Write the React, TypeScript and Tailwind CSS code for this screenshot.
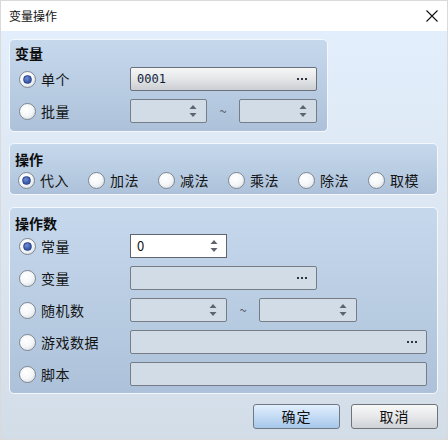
import React from "react";

const font = { fontFamily: '"Noto Sans CJK SC", "Noto Sans", sans-serif' };

function Radio({ checked }: { checked?: boolean }) {
  return (
    <span className="flex h-[17px] w-[17px] shrink-0 items-center justify-center rounded-full border border-[#7f8791] bg-[radial-gradient(circle_at_40%_35%,#ffffff_0%,#f4f6f8_50%,#cfd5dc_100%)]">
      {checked && (
        <span className="h-[9px] w-[9px] rounded-full border border-[#2d4690] bg-[radial-gradient(circle_at_40%_35%,#7290d6_0%,#3a5aa8_60%,#2c4a96_100%)]" />
      )}
    </span>
  );
}

function SpinArrows() {
  return (
    <svg width="8" height="16" viewBox="0 0 8 16" className="shrink-0">
      <path d="M4 2 L7.5 6 L0.5 6 Z" fill="#5d6470" />
      <path d="M0.5 10 L7.5 10 L4 14 Z" fill="#5d6470" />
    </svg>
  );
}

function Dots() {
  return (
    <span className="flex shrink-0 gap-[2px]">
      <span className="h-[2px] w-[2px] bg-[#2f3540]" />
      <span className="h-[2px] w-[2px] bg-[#2f3540]" />
      <span className="h-[2px] w-[2px] bg-[#2f3540]" />
    </span>
  );
}

function DisabledBox({ className = "", children }: { className?: string; children?: React.ReactNode }) {
  return (
    <div
      className={`flex h-[24px] items-center justify-end rounded-[2px] border border-[#767d86] bg-[#d2dce6] pr-[9px] ${className}`}
    >
      {children}
    </div>
  );
}

function OptionLabel({ checked, text }: { checked?: boolean; text: string }) {
  return (
    <div className="flex items-center gap-[5px] pl-[9px]">
      <Radio checked={checked} />
      <span className="text-[14px] leading-[20px] tracking-[0.5px] text-[#141414]">{text}</span>
    </div>
  );
}

function Group({ className = "", children }: { className?: string; children: React.ReactNode }) {
  return (
    <div
      className={`rounded-[5px] border border-[#f4f8fc] bg-[linear-gradient(180deg,#c6d8ec_0%,#adc2da_100%)] ${className}`}
    >
      {children}
    </div>
  );
}

function GroupTitle({ text }: { text: string }) {
  return <div className="h-[20px] pl-[5px] text-[14px] font-bold leading-[20px] text-[#0c0c0c]">{text}</div>;
}

function Tilde() {
  return <span className="w-[32px] text-center text-[13px] leading-[24px] text-[#5a6070]">~</span>;
}

export default function App() {
  const ops = ["代入", "加法", "减法", "乘法", "除法", "取模"];
  return (
    <div
      className="flex h-[440px] w-[448px] flex-col overflow-hidden border border-[#dadada] bg-white"
      style={font}
    >
      {/* title bar */}
      <div className="flex h-[30px] shrink-0 items-center justify-between bg-white pl-[8px] pr-[9px]">
        <span className="text-[12px] leading-[16px] text-[#111]">变量操作</span>
        <svg width="12" height="12" viewBox="0 0 12 12">
          <path d="M0.5 0.5 L11.5 11.5 M11.5 0.5 L0.5 11.5" stroke="#111" strokeWidth="1.1" />
        </svg>
      </div>

      {/* dialog body */}
      <div className="flex flex-1 flex-col bg-[linear-gradient(180deg,#e3eefc_0%,#dce6f2_50%,#d3dde8_100%)] pl-[8px] pr-[9px] pt-[8px]">
        {/* variable */}
        <Group className="h-[93px] w-[319px] pt-[3px]">
          <GroupTitle text="变量" />
          <div className="mt-[4px] grid grid-cols-[120px_1fr] gap-y-[8px] pr-[10px]">
            <div className="flex h-[24px] items-center">
              <OptionLabel checked text="单个" />
            </div>
            <div className="flex h-[24px] items-center justify-between rounded-[2px] border border-[#6b717a] bg-[linear-gradient(180deg,#f6f6f6_0%,#e4e6e8_50%,#cbced2_100%)] pl-[6px] pr-[9px]">
              <span className="font-['DejaVu_Sans_Mono',monospace] text-[12px] font-medium text-[#0f1e3c]">0001</span>
              <Dots />
            </div>
            <div className="flex h-[24px] items-center">
              <OptionLabel text="批量" />
            </div>
            <div className="flex items-center">
              <DisabledBox className="w-[77px]">
                <SpinArrows />
              </DisabledBox>
              <Tilde />
              <DisabledBox className="w-[78px]">
                <SpinArrows />
              </DisabledBox>
            </div>
          </div>
        </Group>

        {/* operation */}
        <Group className="mt-[11px] h-[52px] pt-[5px]">
          <GroupTitle text="操作" />
          <div className="mt-[1px] flex h-[20px]">
            {ops.map((op, i) => (
              <div key={op} className="w-[70px]">
                <div className="flex items-center gap-[5px] pl-[8px]">
                  <Radio checked={i === 0} />
                  <span className="text-[14px] leading-[20px] tracking-[0.5px] text-[#141414]">{op}</span>
                </div>
              </div>
            ))}
          </div>
        </Group>

        {/* operand */}
        <Group className="mt-[12px] h-[187px] pt-[5px]">
          <GroupTitle text="操作数" />
          <div className="mt-[1px] grid grid-cols-[120px_1fr] gap-y-[8px] pr-[10px]">
            <div className="flex h-[24px] items-center">
              <OptionLabel checked text="常量" />
            </div>
            <div className="flex h-[24px] w-[97px] items-center justify-between border border-[#5f656e] bg-white pl-[6px] pr-[8px]">
              <span className="text-[13px] text-[#111]">0</span>
              <SpinArrows />
            </div>

            <div className="flex h-[24px] items-center">
              <OptionLabel text="变量" />
            </div>
            <DisabledBox className="w-[187px]">
              <Dots />
            </DisabledBox>

            <div className="flex h-[24px] items-center">
              <OptionLabel text="随机数" />
            </div>
            <div className="flex items-center">
              <DisabledBox className="w-[97px]">
                <SpinArrows />
              </DisabledBox>
              <Tilde />
              <DisabledBox className="w-[98px]">
                <SpinArrows />
              </DisabledBox>
            </div>

            <div className="flex h-[24px] items-center">
              <OptionLabel text="游戏数据" />
            </div>
            <DisabledBox className="w-full">
              <Dots />
            </DisabledBox>

            <div className="flex h-[24px] items-center">
              <OptionLabel text="脚本" />
            </div>
            <DisabledBox className="w-full" />
          </div>
        </Group>

        {/* actions */}
        <div className="mt-[10px] flex justify-end gap-[11px]">
          <button className="h-[25px] w-[87px] rounded-[3px] border border-[#6f7884] bg-[linear-gradient(180deg,#e2effc_0%,#c4dbf4_50%,#a7c7ea_100%)] text-[14px] tracking-[1px] text-[#111]">
            确定
          </button>
          <button className="h-[25px] w-[87px] rounded-[3px] border border-[#6f7478] bg-[linear-gradient(180deg,#f8f8f8_0%,#e6e8ea_50%,#ced2d6_100%)] text-[14px] tracking-[1px] text-[#111]">
            取消
          </button>
        </div>
      </div>
    </div>
  );
}
